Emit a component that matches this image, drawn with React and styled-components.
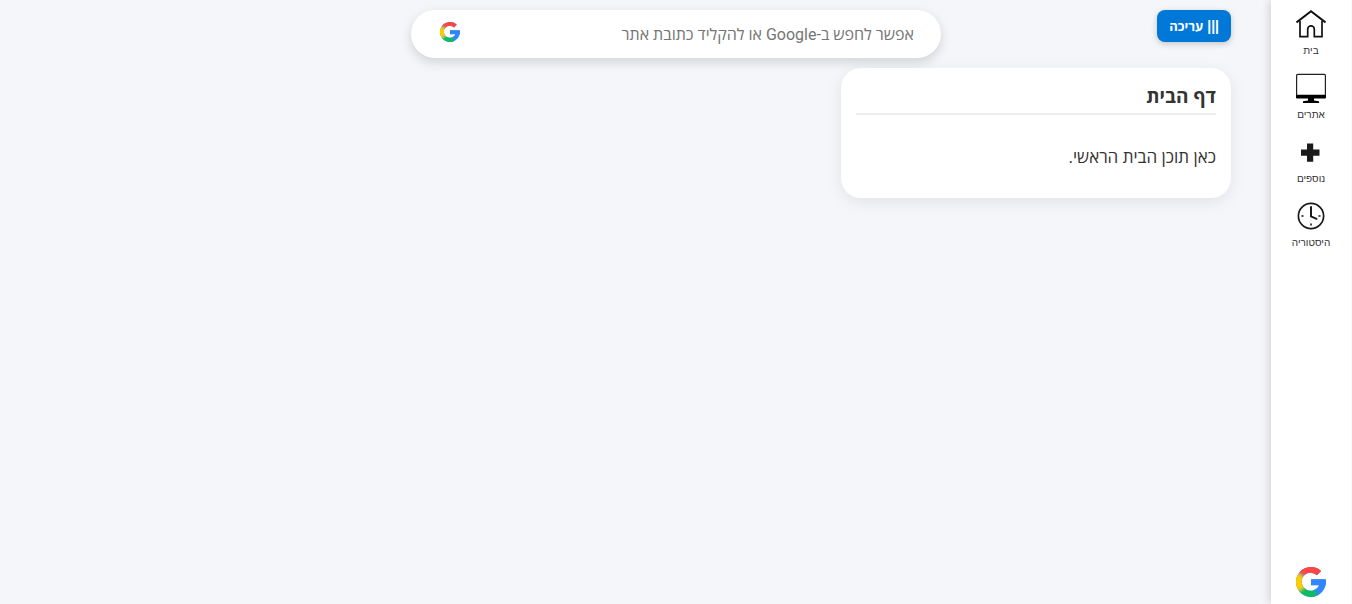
import { useId } from 'react';
import styled, { createGlobalStyle } from 'styled-components';

const GlobalStyle = createGlobalStyle`
    * {
        box-sizing: border-box;
    }
    body {
        margin: 0;
        background: #f4f6fa;
        color: #333;
        font-family: "Open Sans", "Liberation Sans", sans-serif;
    }
`

const Page = styled.div`
    display: flex;
    min-height: 100vh;
`
const Sidebar = styled.nav`
    display: flex;
    flex-direction: column;
    align-items: center;
    gap: 15px;
    flex: 0 0 81px;
    padding: 9px 0 7px;
    border-right: 1px solid #fafafa;
    background: white;
    box-shadow: 0 0 10px rgba(0, 0, 0, 0.2);
`
const SideLink = styled.a`
    display: flex;
    flex-direction: column;
    align-items: center;
    gap: 5px;
    color: #333;
    font-family: "Liberation Sans", Arial, sans-serif;
    font-size: 10px;
    line-height: 14px;
    text-decoration: none;

    svg {
        width: 30px;
        height: 30px;
    }
`
const GoogleLink = styled(SideLink)`
    margin-top: auto;
`
const Main = styled.main`
    flex: 1;
    padding: 10px 40px 10px 121px;
`
const TopBar = styled.header`
    display: grid;
    grid-template-columns: 1fr minmax(0, 530px) 1fr;
    align-items: start;
    margin-bottom: 10px;
`
const EditButton = styled.button`
    display: flex;
    align-items: center;
    gap: 4px;
    justify-self: start;
    height: 32px;
    padding: 0 12px;
    border: none;
    border-radius: 8px;
    background: #0078d7;
    box-shadow: 0 2px 6px rgba(0, 0, 0, 0.2);
    color: white;
    cursor: pointer;
    font-family: "Open Sans", "Liberation Sans", sans-serif;
    font-size: 13px;
    font-weight: 700;
`
const Bars = styled.span`
    font-family: "Liberation Sans", Arial, sans-serif;
    font-size: 14px;
`
const SearchBox = styled.form`
    display: flex;
    align-items: center;
    height: 48px;
    padding: 0 27px 0 29px;
    border-radius: 24px;
    background: white;
    box-shadow: 0 4px 12px rgba(0, 0, 0, 0.15);
`
const SearchInput = styled.input`
    flex: 1;
    min-width: 0;
    padding: 0;
    border: none;
    outline: none;
    background: none;
    font-family: Roboto, "Open Sans", sans-serif;
    font-size: 16px;

    &::placeholder {
        color: #757575;
    }
`
const SearchButton = styled.button`
    display: flex;
    padding: 0 0 4px;
    border: none;
    background: none;
    cursor: pointer;

    svg {
        width: 20px;
        height: 20px;
    }
`
const Cards = styled.div`
    display: grid;
    grid-template-columns: repeat(auto-fill, minmax(0, 390px));
    gap: 20px;
`
const Card = styled.section`
    padding: 15px;
    border-radius: 20px;
    background: white;
    box-shadow: 0 4px 16px rgba(0, 0, 0, 0.08);
`
const CardTitle = styled.h2`
    margin: 0 0 32px;
    padding-bottom: 4px;
    border-bottom: 2px solid #eee;
    font-size: 19px;
    line-height: 26px;
`
const CardText = styled.p`
    margin: 0 0 16px;
    font-size: 17px;
    line-height: 20px;
`

const HomeIcon = () => (
    <svg viewBox="0 0 30 30" fill="none" stroke="#111" strokeWidth="1.7" aria-hidden="true">
        <path d="M.5 13.5 15 2.3l14.5 11.2" strokeWidth="2" />
        <path d="M4 12v15.7h7.7v-7.5a3.3 3.3 0 0 1 6.6 0v7.5H26V12" />
    </svg>
);

const ScreenIcon = () => (
    <svg viewBox="0 0 30 30" aria-hidden="true">
        <rect x=".6" y="1.4" width="28.8" height="22.6" rx="1" fill="none" stroke="#222" strokeWidth="1.2" />
        <path d="M0 21.8h30v2.7a1 1 0 0 1-1 1H1a1 1 0 0 1-1-1zM12 25h6v2.5l5 .8v1.7H7v-1.7l5-.8z" fill="#000" />
    </svg>
);

const PlusIcon = () => (
    <svg viewBox="0 0 30 30" aria-hidden="true">
        <path d="M11 6.5h6.2v6h6.3v6.2h-6.3v6.1H11v-6.1H5v-6.2h6z" fill="#1a1a1a" />
    </svg>
);

const ClockIcon = () => (
    <svg viewBox="0 0 30 30" fill="none" stroke="#1a1a1a" strokeLinecap="round" aria-hidden="true">
        <circle cx="15" cy="15" r="12.6" strokeWidth="1.7" />
        <path d="M15 6v9.3l5.5 2.5" strokeWidth="2" />
        <path d="M6 15h1M23 15h1M15 23v1" strokeWidth="1.6" />
    </svg>
);

const GoogleLogo = () => {
    const id = useId();
    return (
        <svg viewBox="0 0 30 30" aria-hidden="true">
            <clipPath id={`${id}g`}>
                <path d="M25.2 4 21 8.3A9 9 0 1 0 23 18.2H15v-6h14.7A15 15 0 1 1 25.2 4z" />
            </clipPath>
            <filter id={`${id}b`} x="-50%" y="-50%" width="200%" height="200%">
                <feGaussianBlur stdDeviation="1.8" />
            </filter>
            <g clipPath={`url(#${id}g)`}>
                <rect width="30" height="30" fill="#3086ff" />
                <g filter={`url(#${id}b)`}>
                    <path d="M15 15 22 30 15 40-10 38-6 24z" fill="#0ebc5f" />
                    <path d="M16 15-6 30V1z" fill="#ffcc00" />
                    <path d="M15 12-3 3-3-6H34V11z" fill="#ff4641" />
                </g>
                <path d="M14 12.2h16v6H14z" fill="#3086ff" />
            </g>
        </svg>
    );
};

const links = [
    { label: 'בית', Icon: HomeIcon },
    { label: 'אתרים', Icon: ScreenIcon },
    { label: 'נוספים', Icon: PlusIcon },
    { label: 'היסטוריה', Icon: ClockIcon },
];

const App = () => {
    return (
        <>
            <GlobalStyle />
            <Page dir="rtl" lang="he">
                <Sidebar>
                    {links.map(({ label, Icon }) => (
                        <SideLink href="#" key={label}>
                            <Icon />
                            {label}
                        </SideLink>
                    ))}
                    <GoogleLink href="#" aria-label="Google">
                        <GoogleLogo />
                    </GoogleLink>
                </Sidebar>
                <Main>
                    <TopBar>
                        <EditButton type="button">
                            <Bars>|||</Bars>
                            עריכה
                        </EditButton>
                        <SearchBox onSubmit={(e) => e.preventDefault()}>
                            <SearchInput
                                type="text"
                                aria-label="חיפוש"
                                placeholder="אפשר לחפש ב-Google או להקליד כתובת אתר"
                            />
                            <SearchButton type="submit" aria-label="Google">
                                <GoogleLogo />
                            </SearchButton>
                        </SearchBox>
                    </TopBar>
                    <Cards>
                        <Card>
                            <CardTitle>דף הבית</CardTitle>
                            <CardText>כאן תוכן הבית הראשי.</CardText>
                        </Card>
                    </Cards>
                </Main>
            </Page>
        </>
    );
};

export default App;
